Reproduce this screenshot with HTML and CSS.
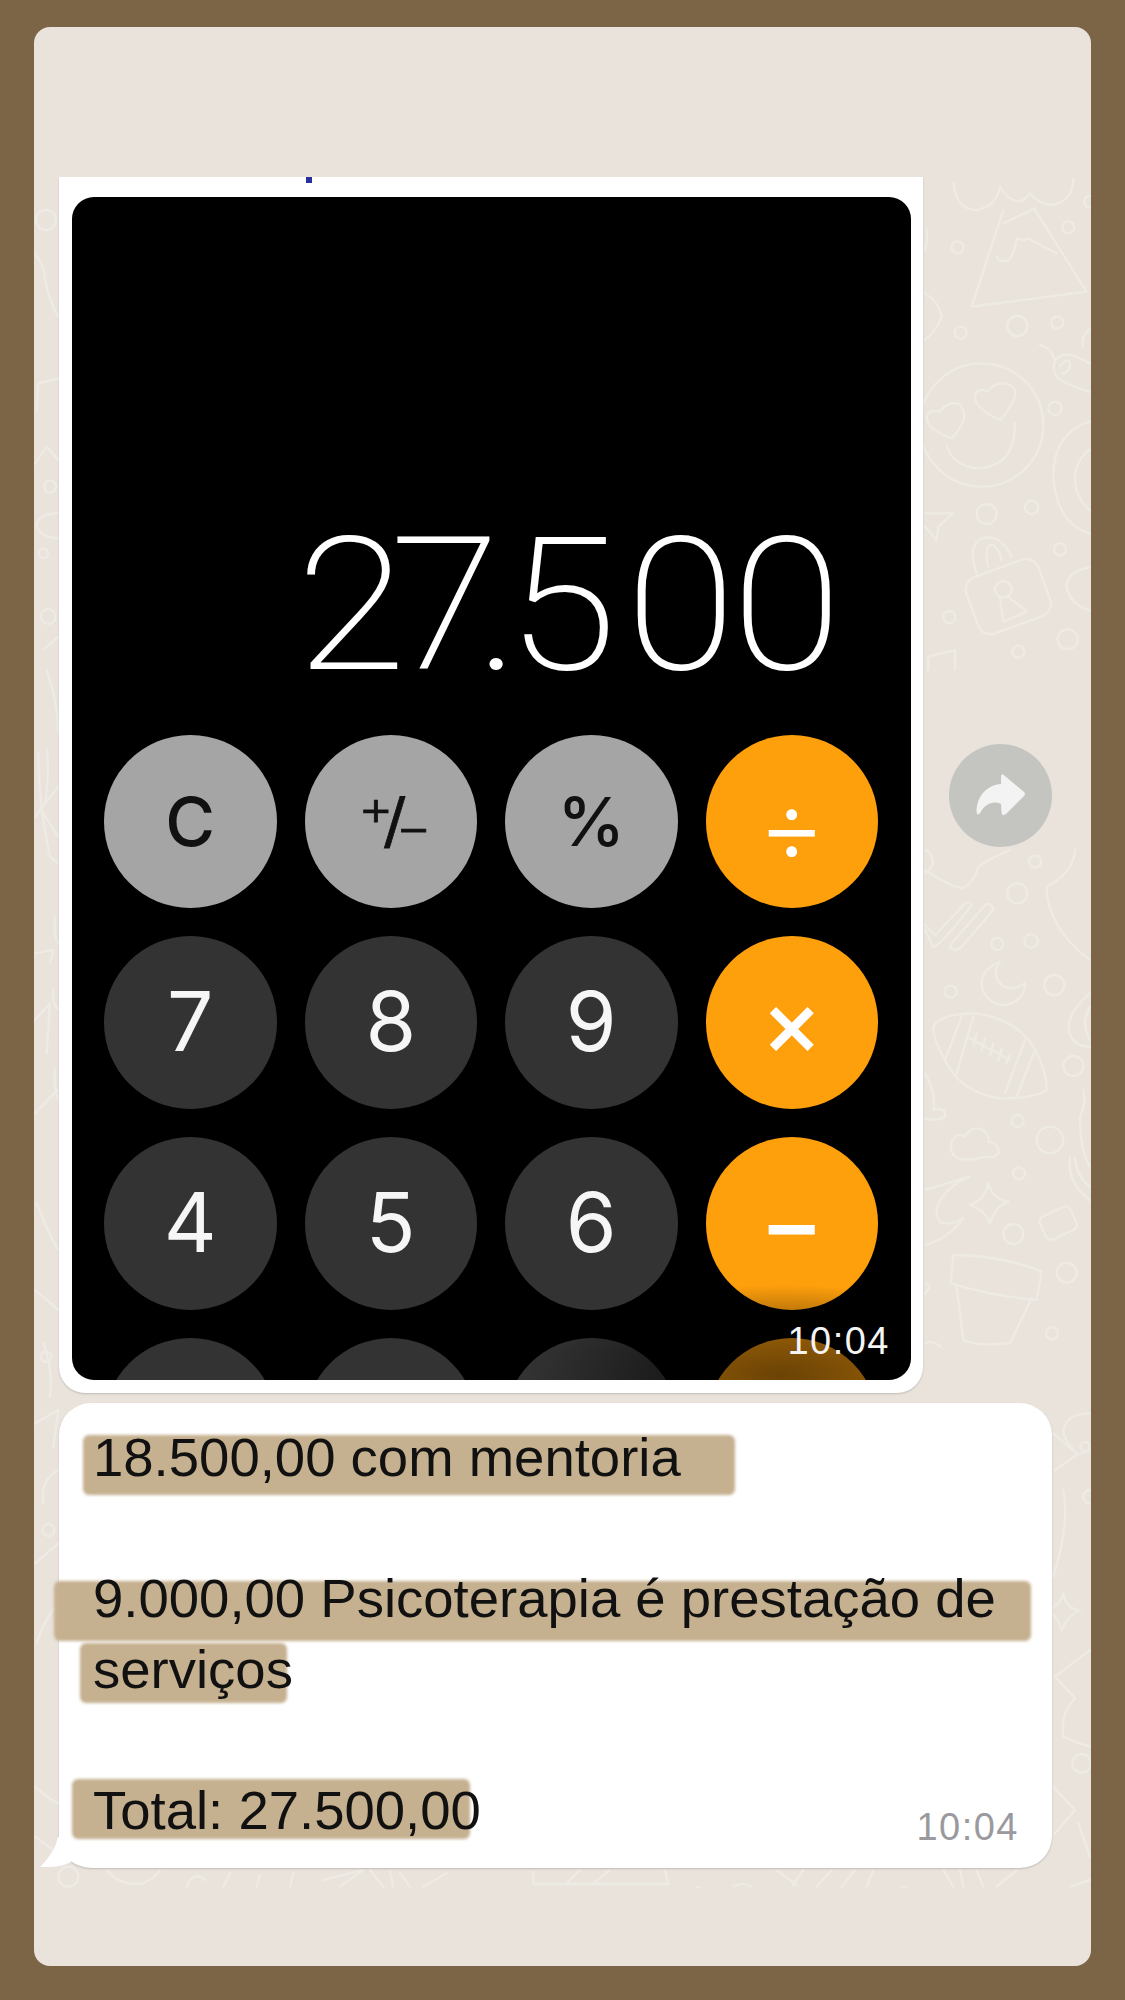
FILE: index.html
```
<!DOCTYPE html>
<html lang="pt-BR">
<head>
<meta charset="utf-8">
<title>Conversa</title>
<link rel="stylesheet" href="styles.css">
</head>
<body>
<main class="panel">
  <div class="panel-top"></div>
  <section class="wall">
    <svg class="doodles" viewBox="34 177 1057 1711" aria-hidden="true">
      <g transform="translate(920 170) scale(.3333)">
        <path d="M100 40Q110 120 170 120Q230 110 240 50Q260 90 300 95Q320 85 330 70Q350 100 400 105Q460 90 460 25"/>
        <path d="M250 120L155 410L500 365L345 120M250 160L345 115"/>
        <path d="M230 260Q240 280 265 270Q285 250 290 205Q310 215 325 205Q350 220 410 250"/>
        <circle cx="113" cy="232" r="18"/><circle cx="445" cy="172" r="18"/><circle cx="122" cy="488" r="18"/><circle cx="292" cy="468" r="30"/><circle cx="412" cy="458" r="18"/><circle cx="405" cy="715" r="20"/><circle cx="200" cy="1032" r="30"/><circle cx="335" cy="1012" r="20"/><circle cx="420" cy="1138" r="18"/><circle cx="88" cy="1342" r="18"/><circle cx="443" cy="1408" r="30"/><circle cx="295" cy="1445" r="18"/><circle cx="510" cy="95" r="18"/>
        <circle cx="185" cy="765" r="185"/>
        <path d="M285 760Q285 890 175 895Q100 890 80 825"/>
        <path d="M240 750Q165 715 165 680Q170 650 205 665Q215 640 250 640Q290 645 285 680Q270 720 240 750Z"/>
        <path d="M95 805Q25 780 20 745Q25 715 60 725Q80 695 115 700Q140 720 130 755Q115 785 95 805Z"/>
        <rect x="150" y="1190" width="230" height="180" rx="40" transform="rotate(-20 265 1280)"/>
        <path d="M170 1210Q140 1130 185 1105Q240 1090 275 1160M205 1190Q190 1130 215 1125Q235 1130 245 1170"/>
        <circle cx="250" cy="1258" r="25"/>
        <path d="M240 1285L250 1355L320 1325L265 1280"/>
        <path d="M525 750Q400 780 400 920Q410 1070 525 1095M525 830Q465 860 465 930Q470 1000 525 1030M525 1190Q440 1200 440 1250Q450 1310 525 1325"/>
        <path d="M360 525Q390 530 405 570Q390 620 440 640Q490 660 525 670M405 570Q430 545 470 560Q510 580 525 590M420 590Q440 560 450 580Q450 610 425 610M525 470Q480 490 490 530"/>
        <path d="M15 1030L100 1030L55 1070L50 1110L15 1070M15 370Q60 400 65 440Q50 480 15 510M20 180Q25 210 15 240M25 1500L25 1460L105 1440L105 1500"/>
      </g>
      <g transform="translate(920 850) scale(.3333)">
        <path d="M15 60Q90 110 130 115Q160 100 175 50Q220 20 270 0M20 0Q60 40 15 70M465 0Q460 70 380 110Q380 230 510 330"/>
        <path d="M15 240L40 290Q60 290 155 165Q150 150 135 160L45 255L15 225"/>
        <path d="M90 290Q105 310 125 290L220 180Q215 155 195 165L95 280Z"/>
        <circle cx="345" cy="35" r="18"/><circle cx="292" cy="130" r="30"/><circle cx="232" cy="282" r="18"/><circle cx="333" cy="273" r="20"/><circle cx="92" cy="425" r="18"/><circle cx="403" cy="405" r="30"/><circle cx="460" cy="648" r="30"/><circle cx="293" cy="813" r="18"/><circle cx="390" cy="870" r="40"/><circle cx="297" cy="970" r="18"/><circle cx="280" cy="1152" r="30"/><circle cx="440" cy="1268" r="30"/><circle cx="396" cy="1450" r="18"/>
        <path d="M240 335Q180 360 185 410Q200 465 260 465Q315 450 315 400Q270 430 240 400Q215 370 240 335Z"/>
        <path d="M40 530Q60 490 170 490Q290 510 340 590Q380 660 380 720Q350 745 240 745Q130 730 80 640Q40 570 40 530Z"/>
        <path d="M125 500L75 630M160 500L110 670M315 570L255 730M345 600L290 740M150 565L270 630M170 550L160 585M195 565L185 600M220 580L210 615M245 597L235 632M270 612L258 640"/>
        <path d="M115 925Q85 910 95 875Q110 845 135 860Q155 825 190 840Q210 860 205 875Q240 880 235 910Q225 925 195 920Q150 935 115 925Z"/>
        <path d="M205 1000Q215 1045 265 1055Q225 1070 210 1120Q195 1080 150 1065Q195 1050 205 1000Z"/>
        <rect x="365" y="1082" width="100" height="75" rx="16" transform="rotate(-25 415 1120)"/>
        <path d="M15 1020L150 980Q95 1000 60 1050Q40 1090 60 1115Q90 1130 130 1105Q80 1170 15 1185"/>
        <path d="M100 1215L92 1300Q230 1340 350 1350L365 1265Q240 1215 100 1215ZM110 1310L130 1470Q170 1490 270 1480L335 1345"/>
        <path d="M450 920Q440 1000 510 1050M465 925Q470 980 510 1010M490 720Q500 760 480 800Q480 900 510 950M510 430Q450 480 445 530Q450 590 510 590M510 470Q480 520 510 570"/>
        <path d="M15 670Q50 730 40 780Q80 770 75 800Q50 815 15 805M15 1300L30 1310L15 1330M15 1480Q40 1470 60 1490"/>
      </g>
      <g transform="translate(30 170) scale(.3333)">
        <circle cx="48" cy="150" r="30"/><circle cx="60" cy="950" r="18"/><circle cx="40" cy="1150" r="14"/><circle cx="55" cy="1340" r="22"/>
        <path d="M15 250Q45 290 45 330Q60 400 85 440M25 640L85 625M25 640L20 720M15 880L50 830L85 870M85 1030Q20 1030 20 1070Q30 1100 85 1105M40 1440Q60 1420 85 1400"/>
      </g>
      <g transform="translate(30 670) scale(.3333)">
        <path d="M50 0Q85 100 85 190M25 250Q25 400 60 560L85 580M50 240Q60 300 45 400M15 440L85 350M40 430L85 500M75 740Q70 800 85 820M15 850L70 840L60 880M70 960Q65 1000 85 1020M15 1050L60 1000L50 1150M75 1200Q70 1250 85 1290M15 1330Q70 1270 85 1260"/>
      </g>
      <g transform="translate(30 1170) scale(.3333)">
        <path d="M20 100Q60 200 85 240M15 360L85 420M40 520Q70 600 60 680M15 760L85 720L70 830M85 900Q30 930 40 1000M15 1180L85 1120M85 1300Q40 1350 20 1420"/>
        <circle cx="55" cy="1080" r="18"/><circle cx="48" cy="560" r="16"/>
      </g>
      <g transform="translate(30 1780) scale(.3333)">
        <circle cx="115" cy="290" r="30"/>
        <path d="M15 20Q60 60 85 70M15 170L70 210M230 270Q270 320 340 310Q380 290 390 270M470 320Q490 270 525 300M580 320L600 280M680 320L690 285M780 320L790 280M880 300L1000 270L930 320M1020 270L1060 320M1080 275L1090 320M1110 280L1140 320M1250 280L1180 320"/>
      </g>
      <g transform="translate(1040 1390) scale(.3333)">
        <path d="M40 130L110 190Q70 150 70 120Q80 70 150 70M45 240L110 195L150 180M70 300Q90 400 40 560M70 610Q80 660 120 660Q80 680 65 720Q55 680 20 660Q60 650 70 610M150 780L45 860L105 925Q60 970 70 1040Q110 1060 150 1070M45 1330L105 1260L40 1190M115 1300L150 1400M150 1470L90 1490"/>
        <circle cx="135" cy="170" r="14"/><circle cx="150" cy="320" r="20"/><circle cx="125" cy="1120" r="28"/>
      </g>
      <g transform="translate(530 1860) scale(.3333)">
        <path d="M10 35L10 72L415 72L405 30M110 70L150 30M190 70L240 30M480 110Q505 60 525 100M610 80Q640 65 665 80M740 30L800 75M820 30L790 75M860 80L905 30M935 80L975 30M1010 80L1030 30M1100 110Q1120 60 1140 100M1240 30L1270 80M1290 30L1300 80M1340 30L1360 80M1400 80L1460 30"/>
      </g>
    </svg>

    <div class="row">
      <article class="bubble bubble-photo">
        <span class="blue-dot"></span>
        <div class="calc">
          <div class="calc-display"><span class="fig-two">2</span><span class="fig-seven">7</span><span class="fig-point">.</span><span class="fig-five">5</span><span>00</span></div>
          <div class="keys">
            <div class="key key-gray">C</div>
            <div class="key key-gray key-sign">⁺/₋</div>
            <div class="key key-gray key-pct">%</div>
            <div class="key key-op key-div">÷</div>
            <div class="key key-dark">7</div>
            <div class="key key-dark">8</div>
            <div class="key key-dark">9</div>
            <div class="key key-op key-mul">×</div>
            <div class="key key-dark">4</div>
            <div class="key key-dark">5</div>
            <div class="key key-dark">6</div>
            <div class="key key-op key-sub">−</div>
            <div class="key key-dark"></div>
            <div class="key key-dark"></div>
            <div class="key key-dark"></div>
            <div class="key key-op"></div>
          </div>
          <div class="calc-fade"></div>
          <time class="calc-time">10:04</time>
        </div>
      </article>
      <button class="forward" type="button" aria-label="Encaminhar">
        <svg viewBox="0 0 103 103" width="103" height="103"><path d="M52 33Q52 28 56 32L75 48Q77 50 75 52L57 70Q53 73 52.500 68L52 60C44 56 36 60 31 69Q28 73 27.500 67C28 52 38 41 52 40Z"/></svg>
      </button>
    </div>

    <article class="bubble bubble-text">
      <svg class="tail" viewBox="0 0 60 31" width="60" height="31" aria-hidden="true"><path d="M18 0Q15 15 0 30Q25 31 33 23Q40 29 60 30L60 0Z"/></svg>
      <p class="line"><span class="mark mark-a"></span>18.500,00 com mentoria</p>
      <p class="line line-gap"><span class="mark mark-b"></span>9.000,00 Psicoterapia é prestação de</p>
      <p class="line"><span class="mark mark-c"></span>serviços</p>
      <p class="line line-gap"><span class="mark mark-d"></span>Total: 27.500,00</p>
      <time class="text-time">10:04</time>
    </article>
  </section>
  <div class="panel-bottom"></div>
</main>
</body>
</html>
```

FILE: styles.css
```
* { box-sizing: border-box; }

html, body {
  margin: 0;
  height: 2000px;
  background: #7b6546;
  overflow: hidden;
}

body {
  padding: 27px 34px 34px;
  font-family: "Liberation Sans", Arial, sans-serif;
}

.panel {
  height: 1939px;
  background: #e9e3dc;
  border-radius: 16px;
  overflow: hidden;
  display: flex;
  flex-direction: column;
}

.panel-top { height: 150px; flex: none; }
.panel-bottom { flex: 1; }

.wall {
  position: relative;
  height: 1711px;
  flex: none;
  padding-left: 25px;
  overflow: hidden;
}

.doodles {
  position: absolute;
  inset: 0;
  width: 100%;
  height: 100%;
  fill: none;
  stroke: #eeeae4;
  stroke-width: 7;
  stroke-linecap: round;
  stroke-linejoin: round;
}

.row {
  position: relative;
  display: flex;
  align-items: flex-start;
  gap: 26px;
}

.bubble {
  position: relative;
  background: #fff;
  box-shadow: 0 1px 2px rgba(0, 0, 0, .18);
}

.bubble-photo {
  width: 864px;
  height: 1216px;
  padding: 20px 12px 13px 13px;
  border-radius: 0 0 26px 26px;
}

.blue-dot {
  position: absolute;
  left: 247px;
  top: 0;
  width: 6px;
  height: 6px;
  background: #2a2fa0;
}

.calc {
  position: relative;
  height: 1183px;
  background: #000;
  border-radius: 22px;
  overflow: hidden;
}

.calc-display {
  height: 538px;
  padding: 0 73px 77px 0;
  display: flex;
  justify-content: flex-end;
  align-items: flex-end;
  color: #fff;
  font-family: Roboto, "Liberation Sans", sans-serif;
  font-weight: 200;
  font-size: 185px;
  line-height: 104px;
  letter-spacing: -3.500px;
  transform: scaleX(1.08);
  transform-origin: 766px 100%;
}

.fig-two { letter-spacing: -15px; }
.fig-seven { letter-spacing: -23px; }
.fig-point { letter-spacing: -12px; }
.fig-five { letter-spacing: 8px; }

.keys {
  padding-left: 32px;
  display: grid;
  grid-template-columns: repeat(4, 172.500px);
  grid-auto-rows: 172.500px;
  column-gap: 28px;
  row-gap: 28.500px;
}

.key {
  border-radius: 50%;
  display: flex;
  align-items: center;
  justify-content: center;
  font-family: Inter, "Liberation Sans", sans-serif;
  font-size: 82px;
  line-height: 1;
}

.key-gray { background: #a5a5a5; color: #111; font-size: 68px; font-weight: 500; }
.key-dark { background: #333; color: #f6f6f6; }
.key-op { background: #fe9f0c; color: #fff; }

.key-sign {
  font-family: "DejaVu Sans", sans-serif;
  font-size: 62px;
  font-weight: 400;
  letter-spacing: -8px;
  -webkit-text-stroke: .8px #111;
}
.key-pct { font-size: 68px; }
.key-div { font-size: 104px; font-weight: 300; padding-top: 8px; }
.key-mul { font-size: 92px; font-weight: 500; }
.key-sub { font-size: 98px; font-weight: 500; }

.calc-fade {
  position: absolute;
  right: 0;
  bottom: 0;
  width: 460px;
  height: 130px;
  background: radial-gradient(260px 90px at 330px 125px, rgba(0, 0, 0, .58), rgba(0, 0, 0, .42) 50%, rgba(0, 0, 0, 0));
}

.calc-time {
  position: absolute;
  right: 21px;
  bottom: 20px;
  color: #f4f4f4;
  font-size: 38px;
  line-height: 38px;
  letter-spacing: 1.500px;
}

.forward {
  margin-top: 567px;
  width: 103px;
  height: 103px;
  padding: 0;
  border: 0;
  border-radius: 50%;
  background: rgba(150, 160, 160, .45);
  flex: none;
}

.forward svg { display: block; fill: #f3f3f3; }

.bubble-text {
  isolation: isolate;
  width: 993px;
  height: 465px;
  margin-top: 10px;
  padding: 20px 0 0 34px;
  border-radius: 32px;
}

.tail {
  position: absolute;
  left: -19px;
  bottom: 0;
  fill: #fff;
  z-index: -2;
}

.line {
  position: relative;
  margin: 0;
  color: #111;
  font-size: 54.500px;
  line-height: 70.500px;
  white-space: nowrap;
}

.line-gap { margin-top: 70.500px; }

.mark {
  position: absolute;
  z-index: -1;
  height: 60px;
  background: #c5b08f;
  border-radius: 6px;
  filter: blur(1.500px);
}

.mark-a { left: -10px; top: 12px; width: 652px; }
.mark-b { left: -39px; top: 17px; width: 977px; }
.mark-c { left: -13px; top: 8px; width: 207px; }
.mark-d { left: -21px; top: 3px; width: 398px; }

.text-time {
  position: absolute;
  right: 33px;
  bottom: 22px;
  color: #9a9a9e;
  font-size: 38px;
  line-height: 38px;
  letter-spacing: 1.500px;
}
```
